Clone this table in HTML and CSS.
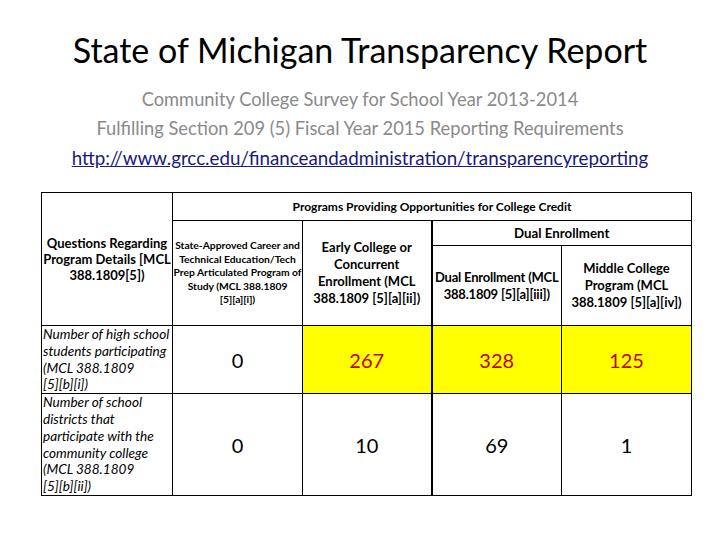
FILE: index.html
```html
<!DOCTYPE html>
<html>
<head>
<meta charset="utf-8">
<link rel="stylesheet" href="styles.css">
</head>
<body>
<h1 class="title">State of Michigan Transparency Report</h1>
<div class="subs">
  <p class="sub">Community College Survey for School Year 2013-2014</p>
  <p class="sub">Fulfilling Section 209 (5) Fiscal Year 2015 Reporting Requirements</p>
  <p class="sub link-line"><a class="link" href="#">http://www.grcc.edu/financeandadministration/transparencyreporting</a></p>
</div>
<table class="report">
  <colgroup>
    <col class="c1"><col class="c2"><col class="c3"><col class="c4"><col class="c5">
  </colgroup>
  <tr class="r1">
    <th rowspan="3" class="qhead">Questions Regarding<br>Program Details [MCL<br>388.1809[5])</th>
    <th colspan="4" class="progs">Programs Providing Opportunities for College Credit</th>
  </tr>
  <tr class="r2">
    <th rowspan="2" class="small">State-Approved Career and<br>Technical Education/Tech<br>Prep Articulated Program of<br>Study (MCL 388.1809<br>[5][a][i])</th>
    <th rowspan="2" class="big">Early College or<br>Concurrent<br>Enrollment (MCL<br>388.1809 [5][a][ii])</th>
    <th colspan="2" class="dual thick">Dual Enrollment</th>
  </tr>
  <tr class="r3">
    <th class="big thick tight">Dual Enrollment (MCL<br>388.1809 [5][a][iii])</th>
    <th class="big">Middle College<br>Program (MCL<br>388.1809 [5][a][iv])</th>
  </tr>
  <tr class="r4">
    <td class="label">Number of high school<br>students participating<br>(MCL 388.1809<br>[5][b][i])</td>
    <td class="num">0</td>
    <td class="num hl">267</td>
    <td class="num hl thick">328</td>
    <td class="num hl">125</td>
  </tr>
  <tr class="r5">
    <td class="label">Number of school<br>districts that<br>participate with the<br>community college<br>(MCL 388.1809<br>[5][b][ii])</td>
    <td class="num">0</td>
    <td class="num">10</td>
    <td class="num thick">69</td>
    <td class="num">1</td>
  </tr>
</table>
</body>
</html>
```
FILE: styles.css
```css
body {
  margin: 0;
  background: #fff;
  font-family: Lato, "Open Sans", sans-serif;
  color: #000;
}
.title {
  margin: 30px 0 0;
  font-size: 34px;
  line-height: 40px;
  font-weight: 400;
  text-align: center;
}
.subs {
  margin-top: 15px;
}
.sub {
  margin: 0;
  font-size: 18.3px;
  line-height: 29px;
  color: #8a8a8a;
  text-align: center;
}
.link-line {
  font-size: 18.8px;
}
.link {
  color: #1a1a7a;
  text-decoration: underline;
}
.report {
  margin: 20px 0 0 41px;
  width: 651px;
  border-collapse: collapse;
  table-layout: fixed;
}
.c1 { width: 131px; }
.c2 { width: 130px; }
.c3 { width: 129px; }
.c4 { width: 130px; }
.c5 { width: 130px; }
.report th, .report td {
  border: 1px solid #000;
  padding: 0;
  text-align: center;
  vertical-align: middle;
  white-space: nowrap;
  overflow: hidden;
}
.r1 { height: 28px; }
.r2 { height: 25px; }
.r3 { height: 80px; }
.r4 { height: 68px; }
.r5 { height: 101px; }
.qhead {
  font-size: 13px;
  line-height: 16px;
  font-weight: 700;
}
.progs {
  font-size: 12px;
  font-weight: 700;
}
.small {
  font-size: 10.3px;
  line-height: 13.5px;
  font-weight: 700;
}
.big {
  font-size: 13px;
  line-height: 17px;
  font-weight: 700;
}
.tight {
  letter-spacing: -0.2px;
}
.dual {
  font-size: 13.3px;
  font-weight: 700;
}
.report .thick {
  border-left: 2px solid #000;
}
.report .label {
  font-size: 13.6px;
  line-height: 16.8px;
  font-style: italic;
  text-align: left;
  padding-left: 1px;
}
.num {
  font-size: 20px;
}
.hl {
  background: #ffff00;
  color: #c00000;
}
```
